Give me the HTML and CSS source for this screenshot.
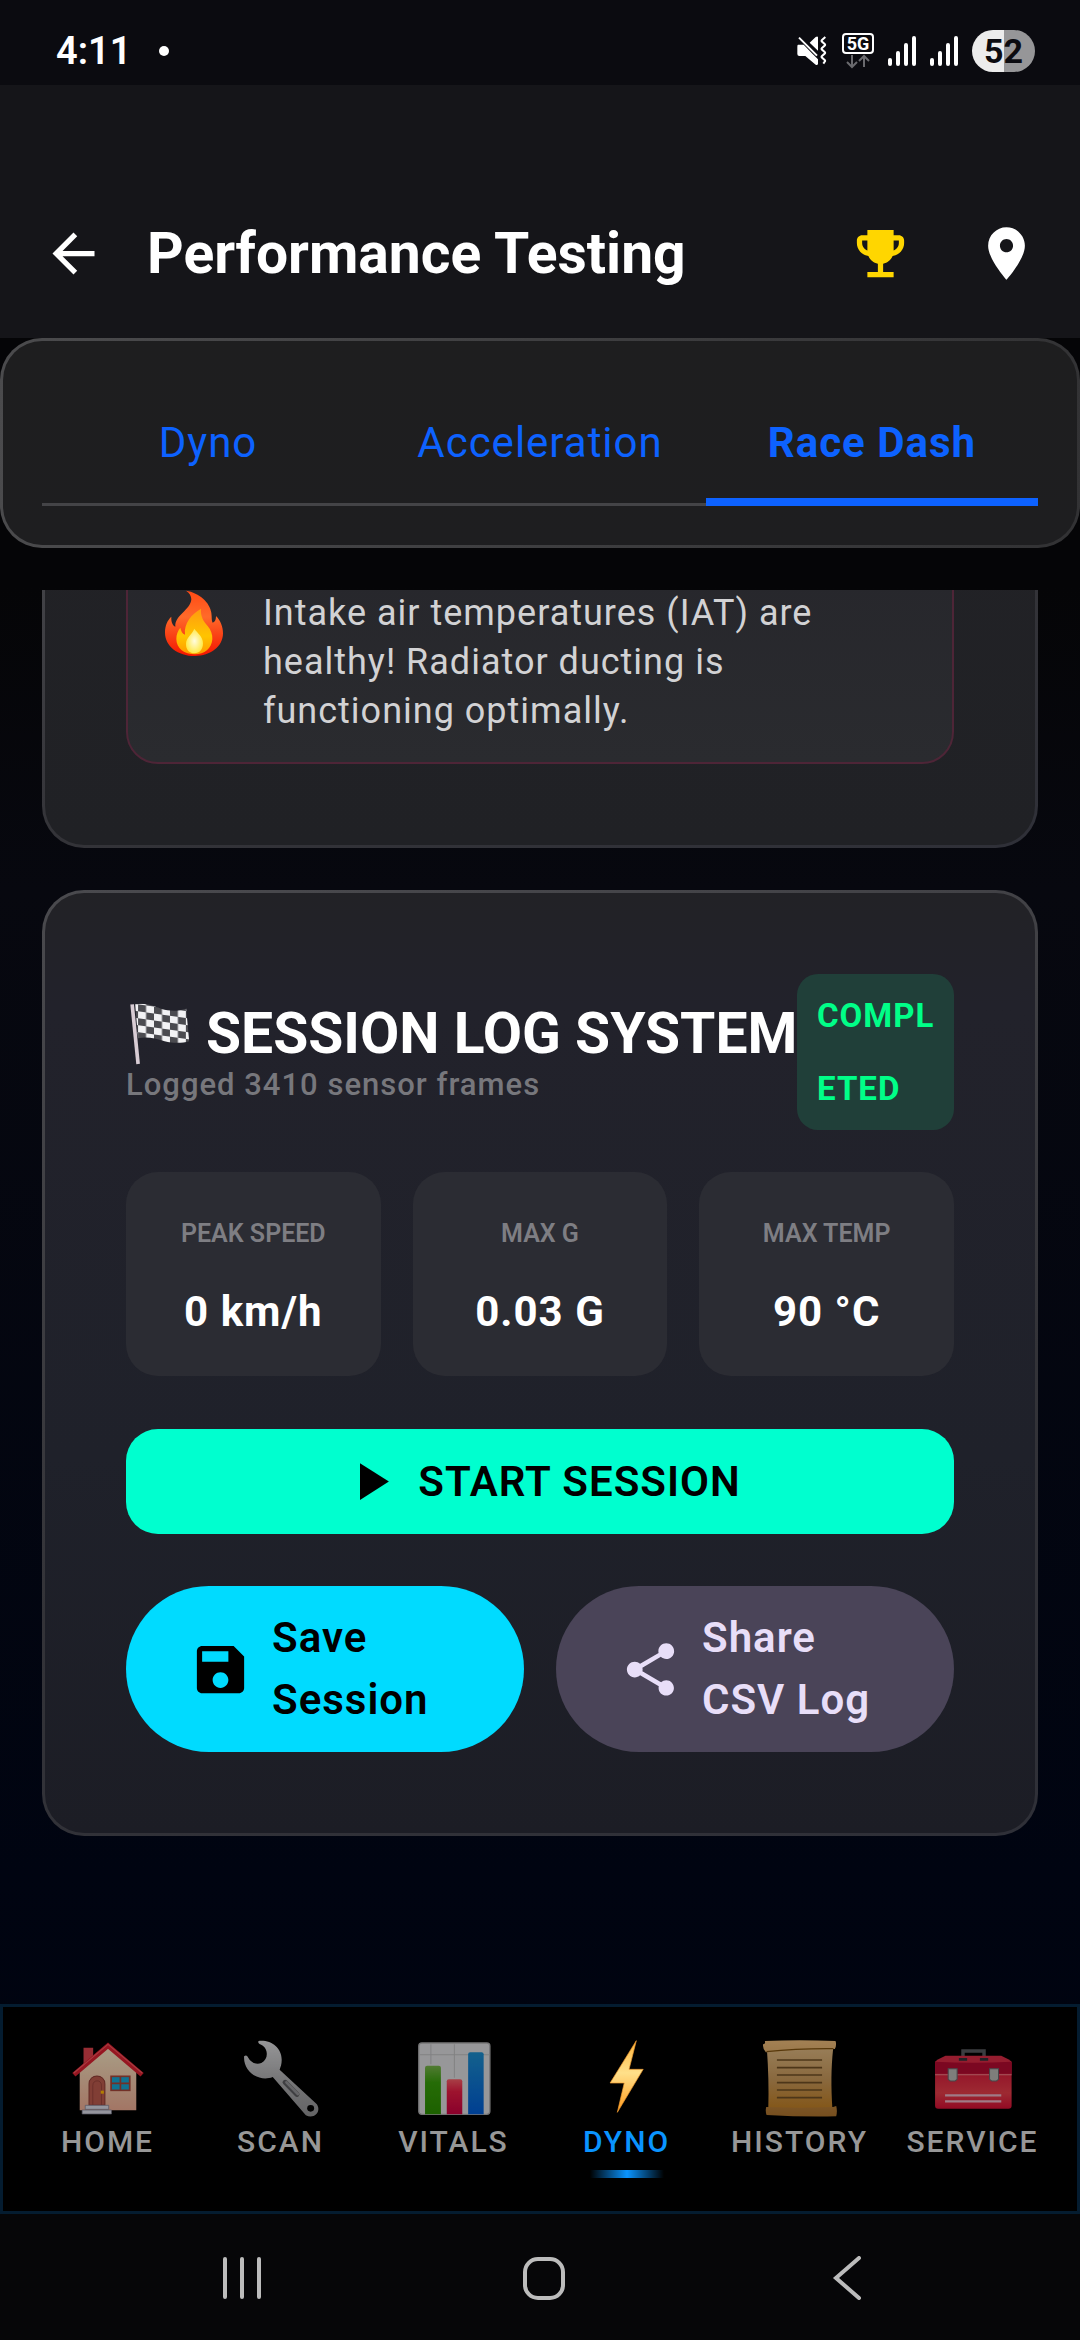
FILE: index.html
```
<!DOCTYPE html>
<html lang="en">
<head>
    <meta charset="UTF-8">
    <meta name="viewport" content="width=device-width, initial-scale=1">
    <title>Performance Testing</title>
    <link rel="stylesheet" href="styles.css">
</head>
<body>
    <div class="status-bar">
        <span class="clock">4:11</span>
        <span class="dot"></span>
        <div class="status-icons">
            <svg width="32" height="32" viewBox="48 74 96 96">
                <path fill="#fff" d="M54 103h17l24 25 19 19v14q-2 5-7 2L76 137H58q-6 0-6-6v-22q0-6 2-6zM89 97l18-17q6-4 7 1v40z"/>
                <path d="M63 78l56 56" stroke="#0b0b10" stroke-width="5"/>
                <path d="M57 82l54 54" stroke="#fff" stroke-width="6"/>
                <path d="M136 80l-10 9q-3 3 0 5l8 7q3 3 0 5l-8 7q-3 3 0 5l8 7q3 3 0 5l-8 7q-3 3 0 5l8 7q3 3 0 5l-4 6" fill="none" stroke="#fff" stroke-width="6"/>
            </svg>
            <svg width="32" height="36" viewBox="0 0 32 36">
                <rect x="1" y="1" width="30" height="19" rx="3" fill="none" stroke="#fff" stroke-width="2"/>
                <text x="16" y="17" class="net-text">5G</text>
                <path d="M10 22v12M5 29l5 5 5-5M22 34V23M17 28l5-5 5 5" fill="none" stroke="#6a6a6e" stroke-width="2"/>
            </svg>
            <svg width="28" height="30" viewBox="0 0 28 30"><path d="M2 24v4M10 17v11M18 9v19M26 2v26" stroke="#fff" stroke-width="4" stroke-linecap="round"/></svg>
            <svg width="28" height="30" viewBox="0 0 28 30"><path d="M2 24v4M10 17v11M18 9v19M26 2v26" stroke="#fff" stroke-width="4" stroke-linecap="round"/></svg>
            <span class="battery">52</span>
        </div>
    </div>

    <header class="app-header">
        <button class="icon-btn" aria-label="Back">
            <svg viewBox="0 0 24 24"><path d="M20 11H7.83l5.59-5.59L12 4l-8 8 8 8 1.41-1.41L7.83 13H20v-2z"/></svg>
        </button>
        <h1>Performance Testing</h1>
        <button class="icon-btn gold" aria-label="Trophies">
            <svg viewBox="0 0 24 24"><path d="M19 5h-2V3H7v2H5c-1.1 0-2 .9-2 2v1c0 2.55 1.92 4.63 4.39 4.94.63 1.5 1.98 2.63 3.61 2.96V19H7v2h10v-2h-4v-3.1c1.63-.33 2.98-1.46 3.61-2.96C19.08 12.63 21 10.55 21 8V7c0-1.1-.9-2-2-2zM5 8V7h2v3.82C5.84 10.4 5 9.3 5 8zm14 0c0 1.3-.84 2.4-2 2.82V7h2v1z"/></svg>
        </button>
        <button class="icon-btn" aria-label="Location">
            <svg viewBox="0 0 24 24"><path d="M12 2C8.13 2 5 5.13 5 9c0 5.25 7 13 7 13s7-7.75 7-13c0-3.87-3.13-7-7-7zm0 9.5c-1.38 0-2.5-1.12-2.5-2.5s1.12-2.5 2.5-2.5 2.5 1.12 2.5 2.5-1.12 2.5-2.5 2.5z"/></svg>
        </button>
    </header>

    <div class="tab-panel">
        <div class="tabs">
            <button class="tab">Dyno</button>
            <button class="tab">Acceleration</button>
            <button class="tab selected">Race Dash</button>
        </div>
    </div>

    <main class="content">
        <section class="card">
            <div class="alert">
                <svg class="flame" viewBox="166 60 174 198">
                    <defs>
                        <linearGradient id="fire" x1="0" y1="0" x2="0" y2="1"><stop offset="0" stop-color="#ff4a14"/><stop offset=".4" stop-color="#ff6a2a"/><stop offset="1" stop-color="#f31500"/></linearGradient>
                        <linearGradient id="fire-in" x1="0" y1="0" x2="0" y2="1"><stop offset="0" stop-color="#ff9a10"/><stop offset=".6" stop-color="#ffc400"/><stop offset="1" stop-color="#ff9a00"/></linearGradient>
                        <radialGradient id="fire-core"><stop offset="0" stop-color="#fffce0"/><stop offset="1" stop-color="#ffe94a"/></radialGradient>
                    </defs>
                    <path fill="url(#fire)" d="M229 62c40 6 72 36 76 66 2 14 0 24 4 30 8-2 10-10 10-20 14 14 21 32 21 52 0 40-38 68-84 68-52 0-90-30-90-70 0-22 8-38 19-48-1 16 4 26 12 30-2-34 46-50 48-82 0-10-6-20-16-26z"/>
                    <path fill="url(#fire-in)" d="M274 116c-2 24 8 38 20 52 10 12 15 26 14 40-2 28-24 45-52 45-32 0-56-18-56-46 0-14 5-26 12-34 2 10 6 18 14 21-4-34 20-62 48-78z"/>
                    <path fill="url(#fire-core)" d="M254 176c10 14 26 24 26 44 0 18-10 30-26 30s-25-12-25-28c0-20 18-28 25-46z"/>
                </svg>
                <p>Intake air temperatures (IAT) are healthy! Radiator ducting is functioning optimally.</p>
            </div>
        </section>

        <section class="card">
            <div class="session-head">
                <div class="session-title">
                    <h2>
                        <svg width="64" height="63" viewBox="48 1300 192 190">
                            <defs>
                                <clipPath id="cloth"><path d="M75 1304c34-6 56 6 80 14 26 8 52 6 74-1l9 98c-22 7-48 7-74 0-28-8-50-14-80-9z"/></clipPath>
                                <pattern id="checks" width="48" height="42" patternUnits="userSpaceOnUse" patternTransform="translate(84 1304) skewY(8)">
                                    <rect width="48" height="42" fill="#f2f2f4"/>
                                    <path fill="#4b4b50" d="M0 0h24v21H0zM24 21h24v21H24z"/>
                                </pattern>
                            </defs>
                            <rect x="70" y="1300" width="172" height="125" fill="url(#checks)" clip-path="url(#cloth)"/>
                            <path d="M66 1304l18 180" stroke="#d8ccd4" stroke-width="11"/>
                        </svg>
                        SESSION LOG SYSTEM
                    </h2>
                    <p>Logged 3410 sensor frames</p>
                </div>
                <span class="badge">COMPLETED</span>
            </div>

            <div class="stats">
                <div class="stat"><span>PEAK SPEED</span><strong>0 km/h</strong></div>
                <div class="stat"><span>MAX G</span><strong>0.03 G</strong></div>
                <div class="stat"><span>MAX TEMP</span><strong>90 °C</strong></div>
            </div>

            <button class="btn start">
                <svg viewBox="0 0 24 24"><path d="M8 5v14l11-7z"/></svg>
                START SESSION
            </button>

            <div class="actions">
                <button class="btn pill save">
                    <svg viewBox="0 0 24 24"><path d="M17 3H5c-1.11 0-2 .9-2 2v14c0 1.1.89 2 2 2h14c1.1 0 2-.9 2-2V7l-4-4zm-5 16c-1.66 0-3-1.34-3-3s1.34-3 3-3 3 1.34 3 3-1.34 3-3 3zm3-10H5V5h10v4z"/></svg>
                    <span>Save Session</span>
                </button>
                <button class="btn pill share">
                    <svg viewBox="0 0 24 24"><path d="M18 16.08c-.76 0-1.44.3-1.96.77L8.91 12.7c.05-.23.09-.46.09-.7s-.04-.47-.09-.7l7.05-4.11c.54.5 1.25.81 2.04.81 1.66 0 3-1.34 3-3s-1.34-3-3-3-3 1.34-3 3c0 .24.04.47.09.7L8.04 9.81C7.5 9.31 6.79 9 6 9c-1.66 0-3 1.34-3 3s1.34 3 3 3c.79 0 1.5-.31 2.04-.81l7.12 4.16c-.05.21-.08.43-.08.65 0 1.61 1.31 2.92 2.92 2.92s2.92-1.31 2.92-2.92-1.31-2.92-2.92-2.92z"/></svg>
                    <span>Share CSV Log</span>
                </button>
            </div>
        </section>
    </main>

    <nav class="bottom-nav">
        <a href="#">
            <svg viewBox="195 151 232 240" preserveAspectRatio="none">
                <defs><linearGradient id="wall" x1="0" y1="0" x2="0" y2="1"><stop offset="0" stop-color="#f0e2c0"/><stop offset="1" stop-color="#e8a890"/></linearGradient></defs>
                <path fill="#d8404a" d="M240 174h28v40l-28 20z"/>
                <path fill="url(#wall)" d="M229 240l82-72 82 72v122H229z"/>
                <path d="M212 255l99-87 99 87" fill="none" stroke="#d6202f" stroke-width="14"/>
                <path d="M212 250l99-86 99 86" fill="none" stroke="#f0565e" stroke-width="3"/>
                <path fill="#b8594c" stroke="#8a3a34" stroke-width="3" d="M256 347v-64c0-32 46-32 46 0v64z"/>
                <path fill="none" stroke="#8a3a34" stroke-width="2" d="M267 347v-60c0-18 25-18 25 0v60"/>
                <rect x="290" y="303" width="9" height="9" fill="#ffb400"/>
                <rect x="320" y="260" width="54" height="42" fill="#17a3cf" stroke="#a34538" stroke-width="5"/>
                <path d="M347 260v42M320 281h54" stroke="#a34538" stroke-width="5"/>
                <path fill="#d4d4e0" stroke="#77778a" stroke-width="2" d="M245 347h68v12h-68zM236 361h85v12h-85z"/>
            </svg>
            HOME
        </a>
        <a href="#">
            <svg viewBox="697 151 232 240" preserveAspectRatio="none">
                <defs><linearGradient id="steel" x1="0" y1="0" x2="0" y2="1"><stop offset="0" stop-color="#d6d6d8"/><stop offset=".5" stop-color="#aaaaac"/><stop offset="1" stop-color="#8e8e90"/></linearGradient></defs>
                <path fill="url(#steel)" d="M748 154c36-4 68 20 67 58 0 12-3 20-6 28l108 104c14 22-8 46-32 33L789 262c-38 16-86-14-83-62 6-6 10-1 12 4 8 14 22 22 38 16 20-10 20-38 6-50-8-6-18-8-14-16z"/>
                <path d="M825 278l34 36" stroke="#5b5b5e" stroke-width="15" stroke-linecap="round"/>
                <path d="M829 278l33 35" stroke="#919194" stroke-width="8" stroke-linecap="round"/>
                <circle cx="899" cy="356" r="10" fill="#000"/>
            </svg>
            SCAN
        </a>
        <a href="#">
            <svg viewBox="1199 151 232 240" preserveAspectRatio="none">
                <defs>
                    <linearGradient id="green" x1="0" y1="0" x2="0" y2="1"><stop offset="0" stop-color="#75b04a"/><stop offset=".35" stop-color="#369a0a"/><stop offset="1" stop-color="#2a8a00"/></linearGradient>
                    <linearGradient id="red" x1="0" y1="0" x2="0" y2="1"><stop offset="0" stop-color="#f05a64"/><stop offset=".35" stop-color="#e01c42"/><stop offset="1" stop-color="#c4003e"/></linearGradient>
                    <linearGradient id="blue" x1="0" y1="0" x2="0" y2="1"><stop offset="0" stop-color="#1c8ac8"/><stop offset="1" stop-color="#005ad0"/></linearGradient>
                </defs>
                <rect x="1213" y="160" width="206" height="214" rx="9" fill="#d8d8da" stroke="#aaaaac" stroke-width="4"/>
                <path d="M1248 164v60M1316 164v100M1216 195h140M1400 195h18" stroke="#b8b8ba" stroke-width="3"/>
                <path fill="url(#green)" d="M1231 374V234q0-6 6-6h34q6 0 6 6v140z"/>
                <path fill="url(#red)" d="M1294 374v-99q0-6 6-6h33q6 0 6 6v99z"/>
                <path fill="url(#blue)" d="M1356 374V194q0-6 6-6h33q6 0 6 6v180z"/>
            </svg>
            VITALS
        </a>
        <a href="#" class="selected">
            <svg viewBox="134 151 232 240" preserveAspectRatio="none">
                <defs><linearGradient id="bolt" x1="0" y1="0" x2="0" y2="1"><stop offset="0" stop-color="#ffb53c"/><stop offset=".45" stop-color="#ffe08a"/><stop offset="1" stop-color="#ff9a1c"/></linearGradient></defs>
                <path fill="url(#bolt)" stroke="#f09a30" stroke-width="2" stroke-linejoin="round" d="M277 153l-76 127h41l-20 88 75-129h-41z"/>
            </svg>
            DYNO
        </a>
        <a href="#">
            <svg viewBox="636 151 232 240" preserveAspectRatio="none">
                <defs>
                    <linearGradient id="paper" x1="0" y1="0" x2="0" y2="1"><stop offset="0" stop-color="#d8b27c"/><stop offset=".5" stop-color="#c4965a"/><stop offset="1" stop-color="#bc7c24"/></linearGradient>
                    <linearGradient id="roll" x1="0" y1="0" x2="0" y2="1"><stop offset="0" stop-color="#e8b878"/><stop offset="1" stop-color="#a8702c"/></linearGradient>
                </defs>
                <path fill="url(#paper)" d="M656 178h192c-6 60-6 110-2 180H660c2-60 0-120-4-180z"/>
                <path fill="url(#roll)" d="M650 154q100-5 205 0 4 12-2 24-100 0-200 10-10-12-8-24 8 0 5-10zM654 352q100 4 194 0l9-3q4 14 0 31-100 2-202-4-4-12-1-24z"/>
                <path d="M655 186q90-10 194-9" stroke="#7c5010" stroke-width="4" fill="none"/>
                <path d="M685 211h131M685 234h131M685 256h131M685 279h131M685 301h131M685 324h131" stroke="#6e4e24" stroke-width="5"/>
            </svg>
            HISTORY
        </a>
        <a href="#">
            <svg viewBox="1138 151 232 240" preserveAspectRatio="none">
                <defs><linearGradient id="box" x1="0" y1="0" x2="0" y2="1"><stop offset="0" stop-color="#d4203c"/><stop offset=".55" stop-color="#e03c48"/><stop offset="1" stop-color="#d01034"/></linearGradient></defs>
                <path d="M1225 206v-22h61v22" fill="none" stroke="#55585c" stroke-width="10"/>
                <path fill="#d42a44" d="M1144 216q4-6 30-18h162q26 12 30 18v38h-222z"/>
                <path fill="url(#box)" d="M1144 252h222v96q0 9-9 9h-204q-9 0-9-9z"/>
                <path fill="#b00a30" d="M1144 216q110 6 222 0v36h-222z"/>
                <path d="M1144 255h222" stroke="#ec7c84" stroke-width="3"/>
                <path d="M1213 209h24M1274 209h24" stroke="#303238" stroke-width="8"/>
                <path fill="#b4b4b0" stroke="#66666a" stroke-width="3" d="M1182 237h26v32l-6 5h-14l-6-5zM1302 237h26v32l-6 5h-14l-6-5z"/>
                <path d="M1173 317h163M1173 335h163" stroke="#e4b0c0" stroke-width="7"/>
            </svg>
            SERVICE
        </a>
    </nav>

    <div class="system-nav">
        <button aria-label="Recents"><svg width="44" height="44" viewBox="0 0 44 44"><path d="M5 3v38M22 3v38M39 3v38"/></svg></button>
        <button aria-label="Home"><svg width="44" height="44" viewBox="0 0 44 44"><rect x="3" y="3" width="38" height="39" rx="13"/></svg></button>
        <button aria-label="Back"><svg width="44" height="44" viewBox="0 0 44 44"><path d="M35 2L12 22l23 20"/></svg></button>
    </div>
</body>
</html>
```
FILE: styles.css
```
*{
    margin: 0;
    padding: 0;
    box-sizing: border-box;
}
body{
    min-height: 100vh;
    display: flex;
    flex-direction: column;
    background: linear-gradient(#050507 25%, #07080f 38%, #000411 80%, #00030e);
    color: #fff;
    font-family: Roboto, "Liberation Sans", sans-serif;
}
button{
    border: none;
    background: none;
    color: inherit;
    font-family: inherit;
    cursor: pointer;
}
svg{
    display: block;
    flex-shrink: 0;
}

/* status bar */
.status-bar{
    display: flex;
    align-items: center;
    height: 85px;
    padding: 17px 45px 0 56px;
    background: #0b0b10;
}
.clock{
    font-size: 38px;
    font-weight: 600;
    line-height: 40px;
}
.dot{
    width: 10px;
    height: 10px;
    margin-left: 28px;
    border-radius: 50%;
    background: #fff;
}
.status-icons{
    display: flex;
    align-items: center;
    gap: 14px;
    margin-left: auto;
}
.status-icons svg{
    overflow: visible;
}
.net-text{
    fill: #fff;
    font-size: 18px;
    font-weight: 700;
    text-anchor: middle;
}
.battery{
    width: 63px;
    border-radius: 21px;
    background: linear-gradient(90deg, #ececec 51%, #969698 51%);
    color: #0b0b10;
    font-size: 34px;
    font-weight: 700;
    line-height: 42px;
    text-align: center;
}

/* header */
.app-header{
    display: flex;
    align-items: center;
    padding: 137px 42px 53px;
    background: #151519;
}
.app-header h1{
    flex: 1;
    margin-left: 42px;
    font-size: 57px;
    font-weight: 700;
    line-height: 63px;
}
.icon-btn svg{
    width: 63px;
    height: 63px;
    fill: #fff;
}
.icon-btn + .icon-btn{
    margin-left: 63px;
}
.gold svg{
    fill: #ffd600;
}

/* tabs */
.tab-panel{
    padding: 39px;
    border: 3px solid transparent;
    border-radius: 42px;
    background: linear-gradient(#1e1e1f, #1e1e20) padding-box,
                linear-gradient(100deg, #4b4b4d, #323234) border-box;
}
.tabs{
    display: flex;
    height: 126px;
    box-shadow: inset 0 -3px #444447;
}
.tab{
    flex: 1;
    padding-bottom: 2px;
    color: #0d62ff;
    font-size: 42px;
    letter-spacing: 1px;
    line-height: 63px;
}
.tab.selected{
    font-weight: 700;
    box-shadow: inset 0 -8px #0d62ff;
}

/* content */
.content{
    flex: 1 1 0;
    min-height: 0;
    display: flex;
    flex-direction: column;
    justify-content: flex-end;
    gap: 42px;
    margin-top: 42px;
    padding: 0 42px 168px;
    overflow: hidden;
}
.card{
    flex-shrink: 0;
    padding: 81px;
    border: 3px solid transparent;
    border-radius: 42px;
    background: linear-gradient(#222226, #202125) padding-box,
                linear-gradient(165deg, #4a4a4e, #333338 60%, #2f3038) border-box;
}
.card + .card{
    background: linear-gradient(#222226, #22222b 12%, #1f212a 60%, #1c1d25) padding-box,
                linear-gradient(165deg, #4a4a4e, #333338 60%, #2f3038) border-box;
}
.alert{
    display: flex;
    align-items: flex-start;
    gap: 40px;
    padding: 60px 37px 26px;
    border: 2px solid #4e2537;
    border-radius: 32px;
    background: linear-gradient(#26262b, #2a2b2f);
}
.flame{
    width: 58px;
    height: 68px;
}
.alert p{
    color: #d2d2d4;
    font-size: 36px;
    letter-spacing: 1px;
    line-height: 49px;
}
.session-head{
    display: flex;
    align-items: center;
}
.session-title{
    flex: 1;
    min-width: 0;
}
.session-title h2{
    display: flex;
    align-items: center;
    gap: 16px;
    font-size: 57px;
    font-weight: 700;
    line-height: 66px;
    white-space: nowrap;
}
.session-title p{
    color: #77777c;
    font-size: 31px;
    font-weight: 500;
    letter-spacing: 1px;
    line-height: 36px;
}
.badge{
    width: 157px;
    padding: 5px 16px 5px 20px;
    border-radius: 21px;
    background: #203f39;
    color: #00ff88;
    font-size: 33px;
    font-weight: 700;
    letter-spacing: 1px;
    line-height: 73px;
    word-break: break-all;
}
.stats{
    display: grid;
    grid-template-columns: repeat(3, 1fr);
    gap: 32px;
    margin-top: 42px;
}
.stat{
    display: flex;
    flex-direction: column;
    gap: 18px;
    padding: 33px 16px;
    border-radius: 32px;
    background: #2b2c33;
    text-align: center;
}
.stat span{
    color: #7e7e83;
    font-size: 25px;
    font-weight: 600;
    line-height: 57px;
}
.stat strong{
    font-size: 42px;
    letter-spacing: 1px;
    line-height: 63px;
}
.btn{
    display: flex;
    align-items: center;
    font-size: 42px;
    font-weight: 600;
    letter-spacing: 1px;
    line-height: 62px;
}
.btn svg{
    width: 63px;
    height: 63px;
    fill: currentColor;
}
.start{
    justify-content: center;
    gap: 16px;
    width: 100%;
    margin-top: 53px;
    padding: 21px;
    border-radius: 32px;
    background: #00ffcf;
    color: #000;
}
.actions{
    display: grid;
    grid-template-columns: 1fr 1fr;
    gap: 32px;
    margin-top: 52px;
}
.pill{
    gap: 20px;
    padding: 21px 63px;
    border-radius: 84px;
    text-align: left;
}
.save{
    background: #00dbff;
    color: #000;
}
.share{
    background: #4a4458;
    color: #e8def8;
}

/* bottom navigation */
.bottom-nav{
    display: flex;
    padding: 33px 18px;
    height: 210px;
    border: 3px solid #041c30;
    background: #000;
}
.bottom-nav a{
    flex: 1 1 0;
    display: flex;
    flex-direction: column;
    align-items: center;
    gap: 3px;
    color: #979797;
    font-size: 30px;
    font-weight: 500;
    letter-spacing: 2px;
    line-height: 38px;
    text-decoration: none;
}
.bottom-nav svg{
    width: 80px;
    height: 80px;
    opacity: .7;
}
.bottom-nav .selected{
    color: #0a94ff;
}
.bottom-nav .selected svg{
    opacity: 1;
}
.bottom-nav .selected::after{
    content: "";
    width: 74px;
    height: 8px;
    margin-top: 6px;
    background: linear-gradient(90deg, transparent, #0a94ff, transparent);
}

/* android buttons */
.system-nav{
    display: flex;
    height: 126px;
    padding: 0 83px 0 91px;
    background: #060608;
}
.system-nav button{
    flex: 1;
    display: flex;
    justify-content: center;
    align-items: flex-start;
    padding-top: 42px;
}
.system-nav svg{
    fill: none;
    stroke: #bcbcbc;
    stroke-width: 4;
    stroke-linecap: round;
}
```
